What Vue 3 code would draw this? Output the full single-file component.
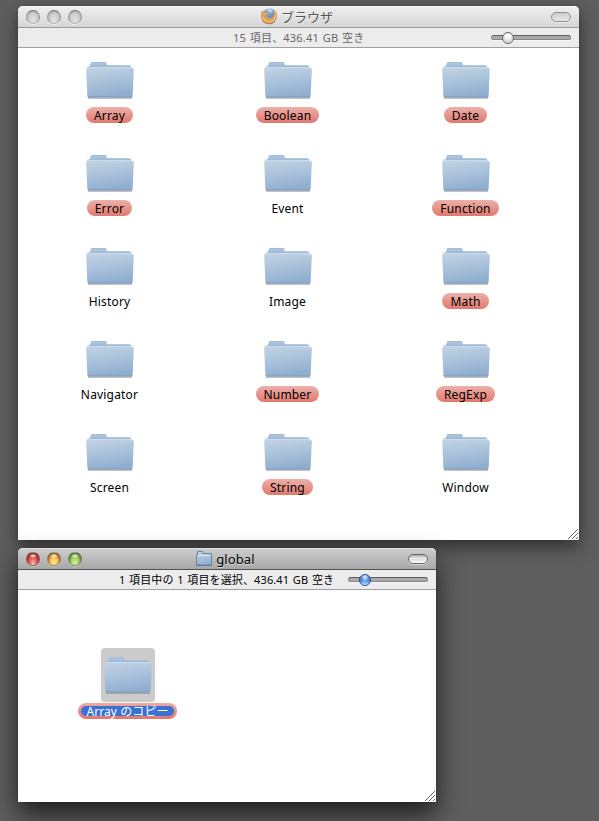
<script setup>
const folders = [
  { name: 'Array', tagged: true }, { name: 'Boolean', tagged: true }, { name: 'Date', tagged: true },
  { name: 'Error', tagged: true }, { name: 'Event' }, { name: 'Function', tagged: true },
  { name: 'History' }, { name: 'Image' }, { name: 'Math', tagged: true },
  { name: 'Navigator' }, { name: 'Number', tagged: true }, { name: 'RegExp', tagged: true },
  { name: 'Screen' }, { name: 'String', tagged: true }, { name: 'Window' },
]
const windows = [
  { id: 'browser', title: 'ブラウザ', status: '15 項目、436.41 GB 空き', active: false, items: folders },
  { id: 'global', title: 'global', status: '1 項目中の 1 項目を選択、436.41 GB 空き', active: true, items: [{ name: 'Array のコピー', selected: true }] },
]
</script>

<template>
  <main class="desktop">
    <svg class="defs" width="0" height="0" aria-hidden="true">
      <defs>
        <linearGradient id="front" x1="0" y1="0" x2=".25" y2="1">
          <stop offset="0" stop-color="#c1d2e3" /><stop offset=".5" stop-color="#abc2db" /><stop offset="1" stop-color="#90afd0" />
        </linearGradient>
        <linearGradient id="back" x1="0" y1="0" x2="0" y2="1">
          <stop offset="0" stop-color="#b4cae0" /><stop offset="1" stop-color="#8fafd0" />
        </linearGradient>
        <linearGradient id="globe" x1="0" y1="0" x2=".6" y2="1">
          <stop offset="0" stop-color="#7fa9d6" /><stop offset=".5" stop-color="#6b98cd" /><stop offset="1" stop-color="#4b6ba4" />
        </linearGradient>
        <linearGradient id="fox" x1="0" y1="0" x2="1" y2="1">
          <stop offset="0" stop-color="#cf8550" /><stop offset=".55" stop-color="#e3a04a" /><stop offset="1" stop-color="#c97c49" />
        </linearGradient>
        <symbol id="folder" viewBox="0 0 48 37">
          <path d="M2 35.4H46V36.7H2Z" fill="#77777c" opacity=".6" />
          <path d="M1.5 8V4.6H3.6L5 .5Q5.3 0 6 0H19.2Q20.3 0 20.5 1L21 3.4H43Q45 3.4 45.3 4.8L46.3 8Z" fill="url(#back)" />
          <path d="M5.5 .5H19.5M21 3.8H43.5" stroke="#9db7d1" stroke-width=".7" />
          <path d="M2 5.5H46" stroke="#d3e0ed" stroke-width=".9" />
          <path d="M1 6.3H47Q48 6.3 47.8 7.7L46.6 34.6Q46.5 35.4 45.6 35.4H2.4Q1.5 35.4 1.4 34.6L.2 7.7Q0 6.3 1 6.3Z" fill="url(#front)" />
          <path d="M2 35H46" stroke="#7b93b2" stroke-width=".9" />
          <path d="M.7 6.8H47.3" stroke="#c6d8e9" stroke-width=".8" />
        </symbol>
      </defs>
    </svg>

    <section v-for="win in windows" :key="win.id" class="window" :class="[win.id, { active: win.active }]">
      <header class="titlebar">
        <div class="lights"><i class="light red" /><i class="light yellow" /><i class="light green" /></div>
        <h1 class="title">
          <svg v-if="win.id === 'browser'" class="fox" viewBox="0 0 16 17">
            <circle cx="8.5" cy="7.6" r="7.2" fill="url(#globe)" />
            <path d="M7 .8Q11 1 11.6 3.6L9.4 5.2Q8.7 3.5 6 3Z" fill="#b9d8e8" />
            <path d="M1.1 2.2L2.3 4Q3.6 2.8 5.1 3.1L5.4 4.7L8 5.2L7 7L5.3 7.7Q6 10.8 9 10.3Q12.2 9.8 13 6.5L13 3.6L13.7 2.6Q16.3 5 15.6 9.4C14.6 18.2 2.7 18.7.5 10.7C-.4 7.5.2 4.5 1.1 2.2Z" fill="url(#fox)" />
            <path d="M2.2 8.5Q3.2 14 8.1 14.2Q13.5 14 14.6 7.2" fill="none" stroke="#f3c86c" stroke-width="1.2" />
            <path d="M1.7 6.4Q3 5 5 5.8" fill="none" stroke="#f0c98b" stroke-width=".8" />
            <path d="M1.3 12.6Q7.2 18.2 14 13.4" fill="none" stroke="#a0664c" stroke-width=".9" />
          </svg>
          <svg v-else class="mini" viewBox="0 0 16 15">
            <path d="M.5 14.2V3.5H1.5V1Q1.5.5 2 .5H6.5Q7 .5 7 1V2.5H15.5V14.2Z" fill="url(#front)" stroke="#6587ae" />
            <path d="M1.5 4.5H14.5" stroke="#dce9f6" /><path d="M.5 14.4H15.5" stroke="#597798" />
          </svg>
          <span>{{ win.title }}</span>
        </h1>
        <i class="pill-button" />
      </header>
      <div class="statusbar">
        <span class="status">{{ win.status }}</span>
        <div class="slider"><i class="knob" /></div>
      </div>
      <div class="content">
        <div v-for="item in win.items" :key="item.name" class="item" :class="{ tagged: item.tagged, selected: item.selected }">
          <div class="icon"><svg class="folder"><use href="#folder" /></svg></div>
          <div class="label"><span>{{ item.name }}</span></div>
        </div>
      </div>
      <svg class="grip" viewBox="0 0 12 12"><path d="M1 11L11 1M5 11L11 5M9 11L11 9" stroke="#666" stroke-width="1" /></svg>
    </section>
  </main>
</template>

<style>
body { margin: 0; overflow: hidden; background: #5e5e5e; }
</style>
<style scoped>
.desktop { position: relative; width: 599px; height: 821px; overflow: hidden; background: #5e5e5e; font-family: "Noto Sans", "Noto Sans CJK JP", sans-serif; color: #000; }
.defs { position: absolute; }
.window { position: absolute; left: 18px; display: flex; flex-direction: column; border-radius: 5px 5px 0 0; background: #fff; box-shadow: 0 0 1px #222, 0 7px 18px rgba(0,0,0,.5); }
.browser { top: 6px; width: 561px; height: 534px; }
.global { top: 548px; width: 418px; height: 254px; box-shadow: 0 0 1px #111, 0 12px 26px rgba(0,0,0,.7); }
.titlebar { box-sizing: border-box; flex: none; height: 22px; display: grid; grid-template-columns: 70px 1fr 70px; align-items: center; padding: 0 8px; border-bottom: 1px solid #999; border-radius: 5px 5px 0 0; background: linear-gradient(#f0f0f0, #d5d5d5); box-shadow: inset 0 1px #f8f8f8; }
.active .titlebar { background: linear-gradient(#cecece, #a8a8a8); border-color: #515151; box-shadow: inset 0 1px #e0e0e0; }
.lights { display: flex; gap: 7px; }
.light { box-sizing: border-box; width: 14px; height: 14px; border: 1px solid #999; border-top-color: #777; border-bottom-color: #b5b5b5; border-radius: 50%; background: radial-gradient(ellipse at 50% 100%, #e6e6e6, #c8c8c8 75%); box-shadow: inset 0 1px 2px #8888, 0 1px #fff9; }
.active .light { border-color: #7779; border-top-color: #4448; box-shadow: inset 0 1px 2px #3338, 0 1px #ddd8; }
.active .red { background: radial-gradient(ellipse 4px 2px at 50% 23%, #fff, transparent), radial-gradient(ellipse at 50% 100%, #ffc8c5, #e1675f 42%, #c6292d 75%, #741b22); }
.active .yellow { background: radial-gradient(ellipse 4px 2px at 50% 23%, #fff, transparent), radial-gradient(ellipse at 50% 100%, #fff397, #f3bf55 50%, #c9702c 80%, #784324); }
.active .green { background: radial-gradient(ellipse 4px 2px at 50% 23%, #fff, transparent), radial-gradient(ellipse at 50% 100%, #dcff9c, #a2ce63 50%, #67963a 80%, #3a6026); }
.title { display: flex; align-items: center; justify-content: center; gap: 4px; margin: 0; padding-right: 3px; font-size: 13px; line-height: 20px; font-weight: 400; color: #555; white-space: nowrap; text-shadow: 0 1px #fff8; }
.active .title { color: #000; letter-spacing: .1px; }
.fox { width: 16px; height: 17px; opacity: .9; }
.mini { width: 16px; height: 15px; }
.pill-button { justify-self: end; box-sizing: border-box; width: 20px; height: 10px; border: 1px solid #8d8d8d; border-radius: 5px; background: linear-gradient(#ccc, #e8e8e8); box-shadow: 0 1px #fff8; }
.active .pill-button { border-color: #666; background: linear-gradient(#aaa, #eee 45%, #ddd 55%, #fff); }
.statusbar { box-sizing: border-box; flex: none; height: 20px; display: grid; grid-template-columns: 1fr 80px; align-items: center; padding-right: 8px; border-bottom: 1px solid #a0a0a0; background: #ececec; }
.status { padding-left: 215px; font-size: 11px; line-height: 18px; letter-spacing: .2px; word-spacing: .7px; color: #666; white-space: nowrap; }
.active .status { padding-left: 101px; letter-spacing: .12px; color: #000; }
.slider { box-sizing: border-box; height: 5px; display: flex; align-items: center; padding-left: 10px; border: 1px solid #868686; border-top-color: #5e5e5e; border-radius: 3px; background: #aaa; box-shadow: 0 1px #fff9; }
.knob { box-sizing: border-box; width: 12px; height: 12px; flex: none; border: 1px solid #666; border-radius: 50%; background: radial-gradient(circle at 50% 30%, #fff 15%, #d4d4d4 70%, #fff); }
.active .knob { border-color: #3042a0; background: radial-gradient(ellipse at 50% 20%, #e4f3ff, transparent 50%), linear-gradient(#719cdf, #4b83d8 55%, #b7f0ff); }
.content { display: grid; grid-template-columns: repeat(3, 178px); grid-auto-rows: 93px; align-content: start; padding: 5px 0 0 3px; }
.active .content { padding: 58px 0 0 21px; }
.item { display: flex; flex-direction: column; align-items: center; }
.icon { box-sizing: border-box; width: 54px; height: 54px; display: flex; justify-content: center; padding-top: 9px; border-radius: 4px; }
.folder { width: 48px; height: 37px; }
.label { height: 16px; margin-right: 1px; padding: 0 8px; border-radius: 8px; font-size: 12px; line-height: 17px; letter-spacing: .18px; white-space: nowrap; }
.tagged .label { background: linear-gradient(#edb0aa, #e6958c 50%, #e0796e); }
.selected .icon { background: #cbcbcb; }
.selected .label { padding: 3px; height: 10px; margin-top: 1px; letter-spacing: .08px; background: linear-gradient(#edaaa3, #df776d); }
.selected .label span { display: block; height: 10px; padding: 0 5px; border-radius: 5px; background: #3b70d5; color: #fff; line-height: 12px; }
.grip { position: absolute; right: 0; bottom: 0; width: 12px; height: 12px; }
</style>
